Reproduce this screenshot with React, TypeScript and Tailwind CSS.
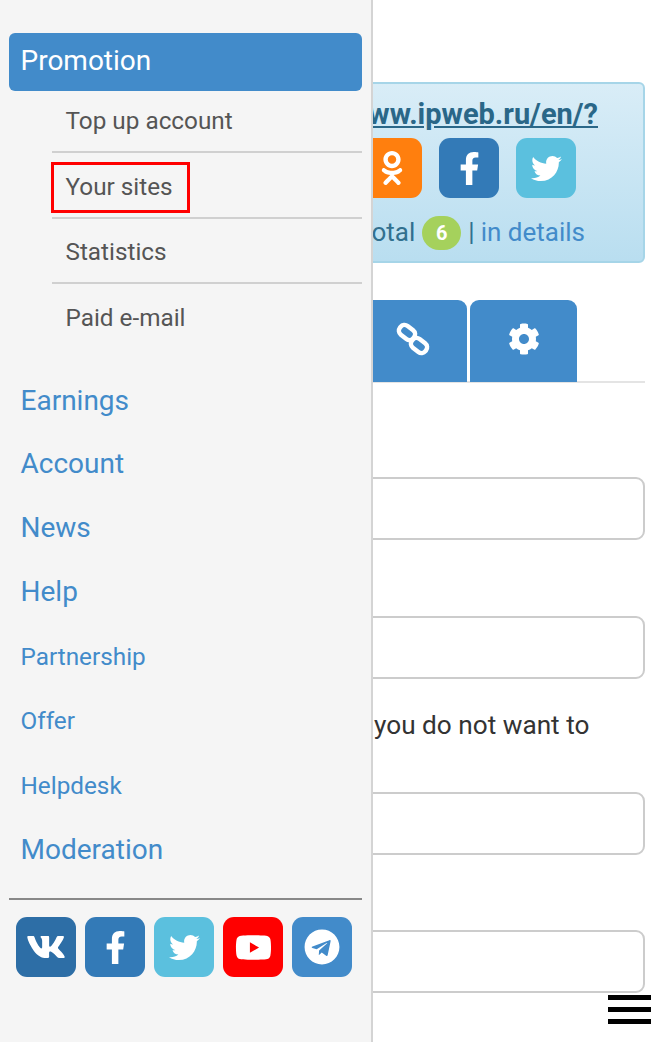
import { FaVk, FaFacebookF, FaTwitter, FaYoutube, FaTelegram, FaOdnoklassniki, FaCog } from "react-icons/fa";

const font = { fontFamily: "Roboto, sans-serif" };

function Social({ bg, children, className = "" }: { bg: string; children: React.ReactNode; className?: string }) {
  return (
    <div className={`w-[60px] h-[60px] rounded-[11px] flex items-center justify-center text-white shrink-0 ${bg} ${className}`}>
      {children}
    </div>
  );
}

const sub = ["Top up account", "Your sites", "Statistics", "Paid e-mail"];

export default function App() {
  return (
    <div className="relative flex w-[666px] h-[1042px] overflow-hidden bg-white font-['Roboto',sans-serif]" style={font}>
      <aside className="w-[373px] shrink-0 h-full bg-[#f5f5f5] border-r-2 border-[#d4d4d4] pt-[33px] pl-[9px] pr-[9px] z-10">
        <div className="h-[58px] rounded-[6px] bg-[#428bca] text-white text-[28px] leading-[56px] pl-[11.5px]">Promotion</div>
        <ul className="ml-[43px] text-[#555] text-[24.3px]">
          <li className="relative h-[62px] leading-[60px] pl-[13.5px] border-b-2 border-[#d0d0d0]">{sub[0]}</li>
          <li className="relative h-[65.5px] leading-[68px] pl-[13.5px] border-b-2 border-[#d0d0d0]">
            {sub[1]}
            <span className="absolute left-[-1px] top-[9px] w-[139px] h-[51px] border-[3px] border-[#ff0000]" />
          </li>
          <li className="h-[65.5px] leading-[66px] pl-[13.5px] border-b-2 border-[#d0d0d0]">{sub[2]}</li>
          <li className="h-[66px] leading-[68px] pl-[13.5px]">{sub[3]}</li>
        </ul>
        <nav className="mt-[19px] pl-[11.5px] text-[#428bca]">
          <div className="h-[64px] leading-[64px] text-[28px]">Earnings</div>
          <div className="h-[64px] leading-[62px] text-[28px]">Account</div>
          <div className="h-[64px] leading-[62px] text-[28px]">News</div>
          <div className="h-[64px] leading-[62px] text-[28px]">Help</div>
          <div className="h-[65px] leading-[64px] text-[24.3px]">Partnership</div>
          <div className="h-[65px] leading-[62px] text-[24.3px]">Offer</div>
          <div className="h-[63px] leading-[62px] text-[24.3px]">Helpdesk</div>
          <div className="h-[64px] leading-[64px] text-[28px]">Moderation</div>
        </nav>
        <div className="mt-[16px] border-t-2 border-[#888]" />
        <div className="flex gap-[9px] pl-[7px] mt-[17px]">
          <Social bg="bg-[#2d6ea6]"><FaVk size={40} /></Social>
          <Social bg="bg-[#337ab7]"><FaFacebookF size={33} /></Social>
          <Social bg="bg-[#5bc0de]"><FaTwitter size={31} /></Social>
          <Social bg="bg-[#ff0000]"><FaYoutube size={37} /></Social>
          <Social bg="bg-[#428bca]"><FaTelegram size={36} /></Social>
        </div>
      </aside>

      <main className="flex-1 min-w-0 overflow-hidden pt-[82px] pr-[21px] text-[#333]">
        <div className="h-[181px] -ml-[200px] rounded-[6px] border-2 border-[#a6d5e8] bg-gradient-to-b from-[#d9edf7] to-[#b9def0] flex flex-col items-end pr-[45px]">
          <a className="mt-[13px] text-[29px] leading-[34px] font-bold text-[#2a6788] underline whitespace-nowrap">www.ipweb.ru/en/?</a>
          <div className="flex gap-[17px] mt-[7px] mr-[22px]">
            <Social bg="bg-[#ff7f0e]"><FaOdnoklassniki size={34} /></Social>
            <Social bg="bg-[#337ab7]"><FaFacebookF size={33} /></Social>
            <Social bg="bg-[#5bc0de]"><FaTwitter size={31} /></Social>
          </div>
          <div className="mt-[16px] mr-[13px] flex items-center text-[26px] leading-[36px] text-[#31708f] whitespace-nowrap">
            Total
            <span className="ml-[7px] mr-[7px] mt-[2px] w-[39px] h-[34px] rounded-full bg-[#a5d15c] text-white text-[20px] font-bold flex items-center justify-center">6</span>
            | <a className="ml-[6px] text-[#428bca]">in details</a>
          </div>
        </div>

        <div className="mt-[37px] h-[83px] -ml-[200px] flex justify-end border-b-2 border-[#e4e4e4] pr-[68px] gap-[3px]">
          <div className="w-[294px] h-[82px] rounded-t-[9px] bg-[#428bca] text-white flex items-center justify-end pr-[36px]">
            <svg width="36" height="34" viewBox="0 0 36 34" fill="none" stroke="currentColor" strokeWidth="4.5" className="mb-[5px]">
              <rect x="3.5" y="5" width="17" height="11" rx="5" transform="rotate(38 12 10.5)" />
              <rect x="15.5" y="18" width="17" height="11" rx="5" transform="rotate(38 24 23.5)" />
            </svg>
          </div>
          <div className="w-[107px] h-[82px] rounded-t-[9px] bg-[#428bca] text-white flex items-center justify-center">
            <FaCog size={32} className="mb-[4px]" />
          </div>
        </div>

        <div className="mt-[94px] h-[63px] -ml-[20px] rounded-[9px] border-2 border-[#ccc]" />
        <div className="mt-[76px] h-[63px] -ml-[20px] rounded-[9px] border-2 border-[#ccc]" />
        <p className="mt-[29px] h-[67px] pl-px text-[26.2px] leading-[34px] whitespace-nowrap">you do not want to</p>
        <div className="mt-[17px] h-[63px] -ml-[20px] rounded-[9px] border-2 border-[#ccc]" />
        <div className="mt-[75px] h-[63px] -ml-[20px] rounded-[9px] border-2 border-[#ccc]" />
      </main>

      <div className="absolute right-[15px] top-[995px] w-[43px] flex flex-col gap-[7px] z-20">
        <span className="block h-[5px] bg-black" />
        <span className="block h-[5px] bg-black" />
        <span className="block h-[5px] bg-black" />
      </div>
    </div>
  );
}
